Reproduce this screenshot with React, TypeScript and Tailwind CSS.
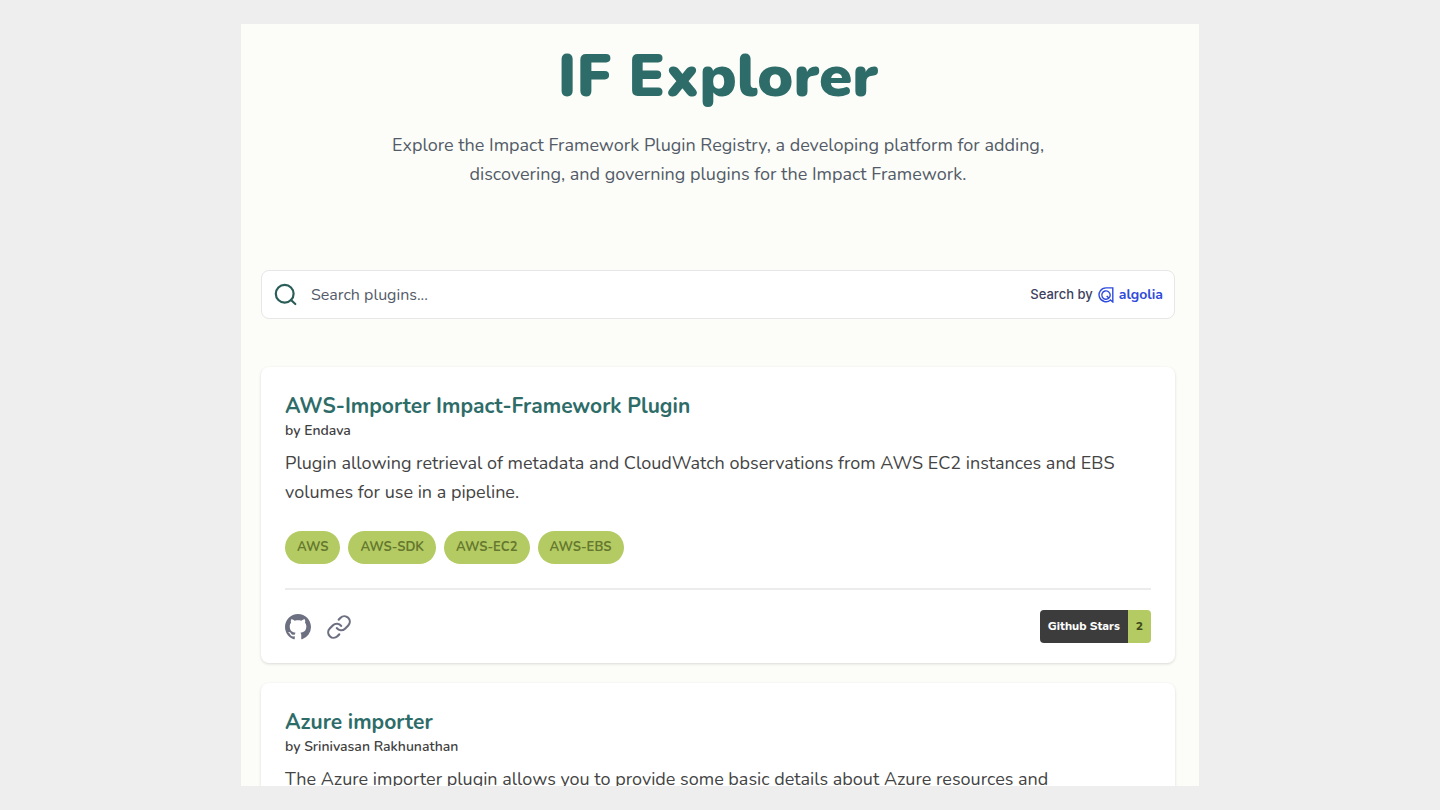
import React from 'react';

interface Plugin {
  id: string;
  name: string;
  author: string;
  description: string;
  tags: string[];
  stars?: number;
}

const plugins: Plugin[] = [
  {
    id: 'aws-importer',
    name: 'AWS-Importer Impact-Framework Plugin',
    author: 'Endava',
    description: 'Plugin allowing retrieval of metadata and CloudWatch observations from AWS EC2 instances and EBS volumes for use in a pipeline.',
    tags: ['AWS', 'AWS-SDK', 'AWS-EC2', 'AWS-EBS'],
    stars: 2,
  },
  {
    id: 'azure-importer',
    name: 'Azure importer',
    author: 'Srinivasan Rakhunathan',
    description: 'The Azure importer plugin allows you to provide some basic details about Azure resources and',
    tags: [],
  },
];

const SearchIcon = () => (
  <svg className="size-6 shrink-0" viewBox="0 0 24 24" fill="none" stroke="#2b5d59" strokeWidth="2.2" strokeLinecap="round" aria-hidden="true">
    <circle cx="10.7" cy="10.7" r="8.9" />
    <path d="M17 17l4.3 4" />
  </svg>
);

const AlgoliaIcon = () => (
  <svg className="size-4" viewBox="0 0 16 16" fill="none" stroke="#2f4bdc" strokeWidth="1.4" aria-hidden="true">
    <path d="M14.8 .9H8a6.9 6.9 0 1 0 4.5 12.1l2.3 2z" />
    <path d="M10.9 11.1A4.2 4.2 0 1 1 12.2 8c0 1.3-.4 2.2-1.3 3.1L8.7 8.9" />
  </svg>
);

const GithubIcon = () => (
  <svg className="size-[26px]" viewBox="0 0 16 16" fill="#6d7080" aria-hidden="true">
    <path d="M8 0C3.58 0 0 3.58 0 8c0 3.54 2.29 6.53 5.47 7.59.4.07.55-.17.55-.38 0-.19-.01-.82-.01-1.49-2.01.37-2.53-.49-2.69-.94-.09-.23-.48-.94-.82-1.13-.28-.15-.68-.52-.01-.53.63-.01 1.08.58 1.23.82.72 1.21 1.87.87 2.33.66.07-.52.28-.87.51-1.07-1.78-.2-3.64-.89-3.64-3.95 0-.87.31-1.59.82-2.15-.08-.2-.36-1.02.08-2.12 0 0 .67-.21 2.2.82.64-.18 1.32-.27 2-.27s1.36.09 2 .27c1.53-1.04 2.2-.82 2.2-.82.44 1.1.16 1.92.08 2.12.51.56.82 1.27.82 2.15 0 3.07-1.87 3.75-3.65 3.95.29.25.54.73.54 1.48 0 1.07-.01 1.93-.01 2.2 0 .21.15.46.55.38A8.01 8.01 0 0 0 16 8c0-4.42-3.58-8-8-8" />
  </svg>
);

const LinkIcon = () => (
  <svg className="size-[26px]" viewBox="0 0 24 24" fill="none" stroke="#6d7080" strokeWidth="2" strokeLinecap="round" strokeLinejoin="round" aria-hidden="true">
    <path d="M10 13a5 5 0 0 0 7.54.54l3-3a5 5 0 0 0-7.07-7.07l-1.72 1.71" />
    <path d="M14 11a5 5 0 0 0-7.54-.54l-3 3a5 5 0 0 0 7.07 7.07l1.71-1.71" />
  </svg>
);

const PluginCard = ({ plugin }: { plugin: Plugin }) => (
  <article className="rounded-lg bg-white px-6 pt-6 pb-5 shadow-[0_1px_3px_rgba(0,0,0,0.14)]">
    <h2 className="text-[21px] leading-[30px] font-bold text-[#2d6c68]">{plugin.name}</h2>
    <p className="text-[14px] leading-[20px] font-semibold text-[#3f3f3f]">by {plugin.author}</p>
    <p className="mt-2 text-[18px] leading-[29px] text-[#444444]">{plugin.description}</p>

    {plugin.tags.length > 0 && (
      <ul className="mt-6 flex flex-wrap gap-2">
        {plugin.tags.map((tag) => (
          <li key={tag} className="rounded-full bg-[#b3cb62] px-3 text-[13px] leading-[33px] font-bold text-[#66782f]">
            {tag}
          </li>
        ))}
      </ul>
    )}

    {plugin.stars !== undefined && (
      <div className="mt-6 flex items-center justify-between border-t-2 border-[#ececec] pt-5">
        <div className="flex items-center gap-[15px]">
          <a href="#github" aria-label="Github repository">
            <GithubIcon />
          </a>
          <a href="#link" aria-label="Plugin page">
            <LinkIcon />
          </a>
        </div>
        <div className="flex overflow-hidden rounded-sm text-[12px] leading-[33px] font-extrabold">
          <span className="bg-[#3c3c3c] px-2 text-white">Github Stars</span>
          <span className="bg-[#b3cb62] px-2 text-[#3f4a1c]">{plugin.stars}</span>
        </div>
      </div>
    )}
  </article>
);

const App: React.FC = () => {
  return (
    <div className="h-screen bg-[#eeeeee] py-6 font-['Nunito','Lato',sans-serif]">
      <main className="mx-auto h-full max-w-[958px] overflow-hidden bg-[#fcfdf8] pr-6 pl-5">
        <header className="pt-4 text-center">
          <h1 className="text-[60px] leading-[72px] font-black text-[#2d6c68]">IF Explorer</h1>
          <p className="mx-auto mt-[19px] max-w-[680px] text-[18px] leading-[29px] text-[#535b68]">
            Explore the Impact Framework Plugin Registry, a developing platform for adding, discovering, and governing plugins for the Impact Framework.
          </p>
        </header>

        <div className="mt-[81px] flex h-[49px] items-center rounded-lg border border-[#e6e7e6] bg-white pr-[11px] pl-3">
          <SearchIcon />
          <input
            type="search"
            aria-label="Search plugins"
            placeholder="Search plugins..."
            className="ml-[13px] min-w-0 flex-1 text-[16px] outline-none placeholder:text-[#535b68]"
          />
          <a href="#algolia" className="flex items-center gap-[5px]">
            <span className="font-['Inter',sans-serif] text-[13px] font-medium text-[#3e3f5e]">Search by</span>
            <AlgoliaIcon />
            <span className="text-[14px] font-bold text-[#2f4bdc]">algolia</span>
          </a>
        </div>

        <section className="mt-12 flex flex-col gap-5">
          {plugins.map((plugin) => (
            <PluginCard key={plugin.id} plugin={plugin} />
          ))}
        </section>
      </main>
    </div>
  );
};

export default App;
